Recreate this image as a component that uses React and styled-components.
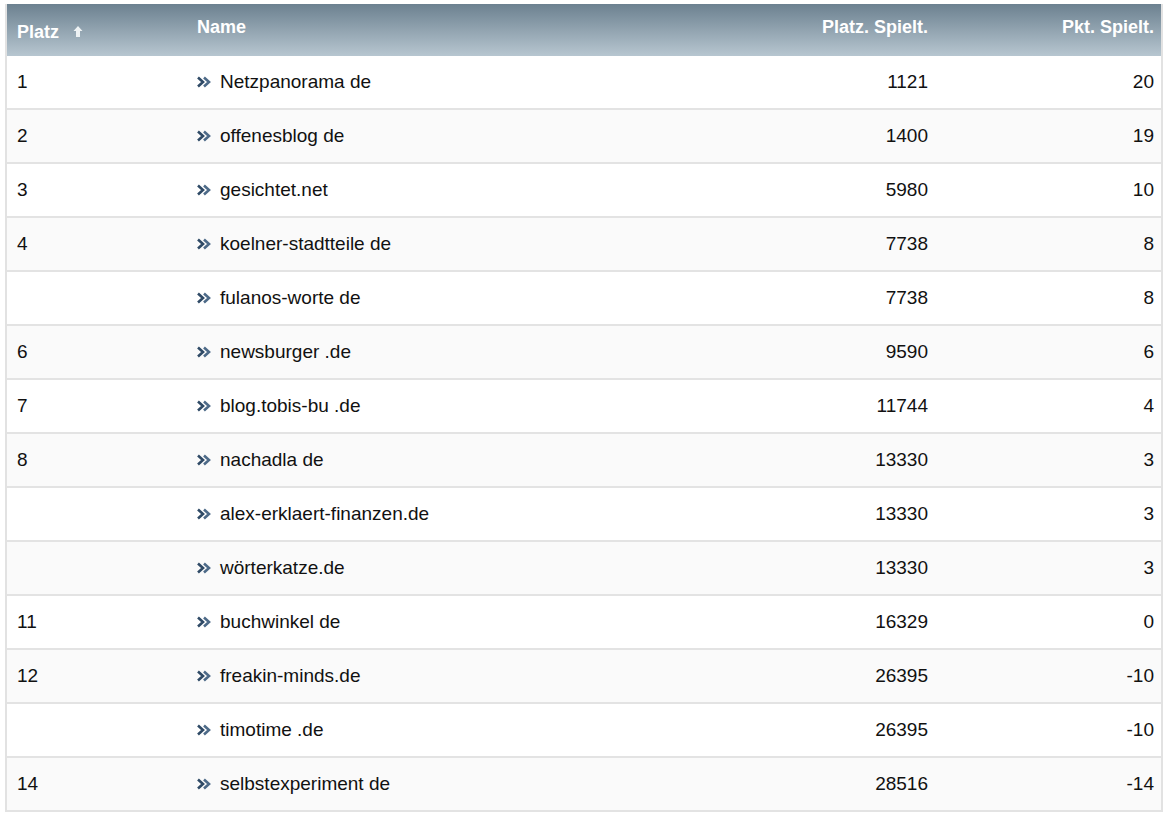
import React from 'react';
import styled, { createGlobalStyle } from 'styled-components';

const Global = createGlobalStyle`
  body { margin: 0; background: #fff; font-family: "Liberation Sans", Arial, sans-serif; }
`;

const rows = [
  ['1', 'Netzpanorama de', 1121, 20],
  ['2', 'offenesblog de', 1400, 19],
  ['3', 'gesichtet.net', 5980, 10],
  ['4', 'koelner-stadtteile de', 7738, 8],
  ['', 'fulanos-worte de', 7738, 8],
  ['6', 'newsburger .de', 9590, 6],
  ['7', 'blog.tobis-bu .de', 11744, 4],
  ['8', 'nachadla de', 13330, 3],
  ['', 'alex-erklaert-finanzen.de', 13330, 3],
  ['', 'wörterkatze.de', 13330, 3],
  ['11', 'buchwinkel de', 16329, 0],
  ['12', 'freakin-minds.de', 26395, -10],
  ['', 'timotime .de', 26395, -10],
  ['14', 'selbstexperiment de', 28516, -14],
];

const cols = '180px 560px 192px 226px';

const Table = styled.div`
  margin: 4px 5px 0 5px;
  width: 1158px;
  border-left: 2px solid #e2e2e2;
  border-right: 2px solid #e2e2e2;
  box-sizing: border-box;
`;

const Head = styled.div`
  display: grid;
  grid-template-columns: ${cols};
  height: 52px;
  background: linear-gradient(#6c8190, #b7c6d0);
  color: #fff;
  font-weight: bold;
  font-size: 18px;
`;

const HCell = styled.div`
  display: flex;
  align-items: center;
  justify-content: ${p => (p.$right ? 'flex-end' : 'flex-start')};
  padding: ${p => (p.$right ? '0 11px 6px 0' : '0 0 0 10px')};
  padding-bottom: 6px;
  ${p => p.$top && 'align-items: flex-start; padding-top: 16px;'}
`;

const Row = styled.div`
  display: grid;
  grid-template-columns: ${cols};
  height: 52px;
  border-bottom: 2px solid #e3e3e3;
  background: ${p => (p.$alt ? '#fafafa' : '#fff')};
  font-size: 19px;
  color: #111;
`;

const Cell = styled.div`
  display: flex;
  align-items: center;
  justify-content: ${p => (p.$right ? 'flex-end' : 'flex-start')};
  padding: ${p => (p.$right ? '0 11px 0 0' : '0 0 0 10px')};
`;

const Chevron = () => (
  <svg width="15" height="12" viewBox="0 0 15 12" style={{ marginRight: 8 }}>
    <path d="M1 1.5 L6 6 L1 10.5" fill="none" stroke="#2f4a66" strokeWidth="2.6" />
    <path d="M7 1.5 L12 6 L7 10.5" fill="none" stroke="#4d6a88" strokeWidth="2.6" />
  </svg>
);

const SortArrow = () => (
  <svg width="10" height="14" viewBox="0 0 10 14" style={{ marginLeft: 14 }}>
    <path d="M5 1 L9.5 6 L7 6 L7 12 L3 12 L3 6 L0.5 6 Z" fill="#eef2f4" />
  </svg>
);

export default function App() {
  return (
    <>
      <Global />
      <Table>
        <Head>
          <HCell style={{ paddingTop: 10 }}>Platz<SortArrow /></HCell>
          <HCell>Name</HCell>
          <HCell $right>Platz. Spielt.</HCell>
          <HCell $right>Pkt. Spielt.</HCell>
        </Head>
        {rows.map((r, i) => (
          <Row key={i} $alt={i % 2 === 1}>
            <Cell>{r[0]}</Cell>
            <Cell><Chevron />{r[1]}</Cell>
            <Cell $right>{r[2]}</Cell>
            <Cell $right>{r[3]}</Cell>
          </Row>
        ))}
      </Table>
    </>
  );
}
